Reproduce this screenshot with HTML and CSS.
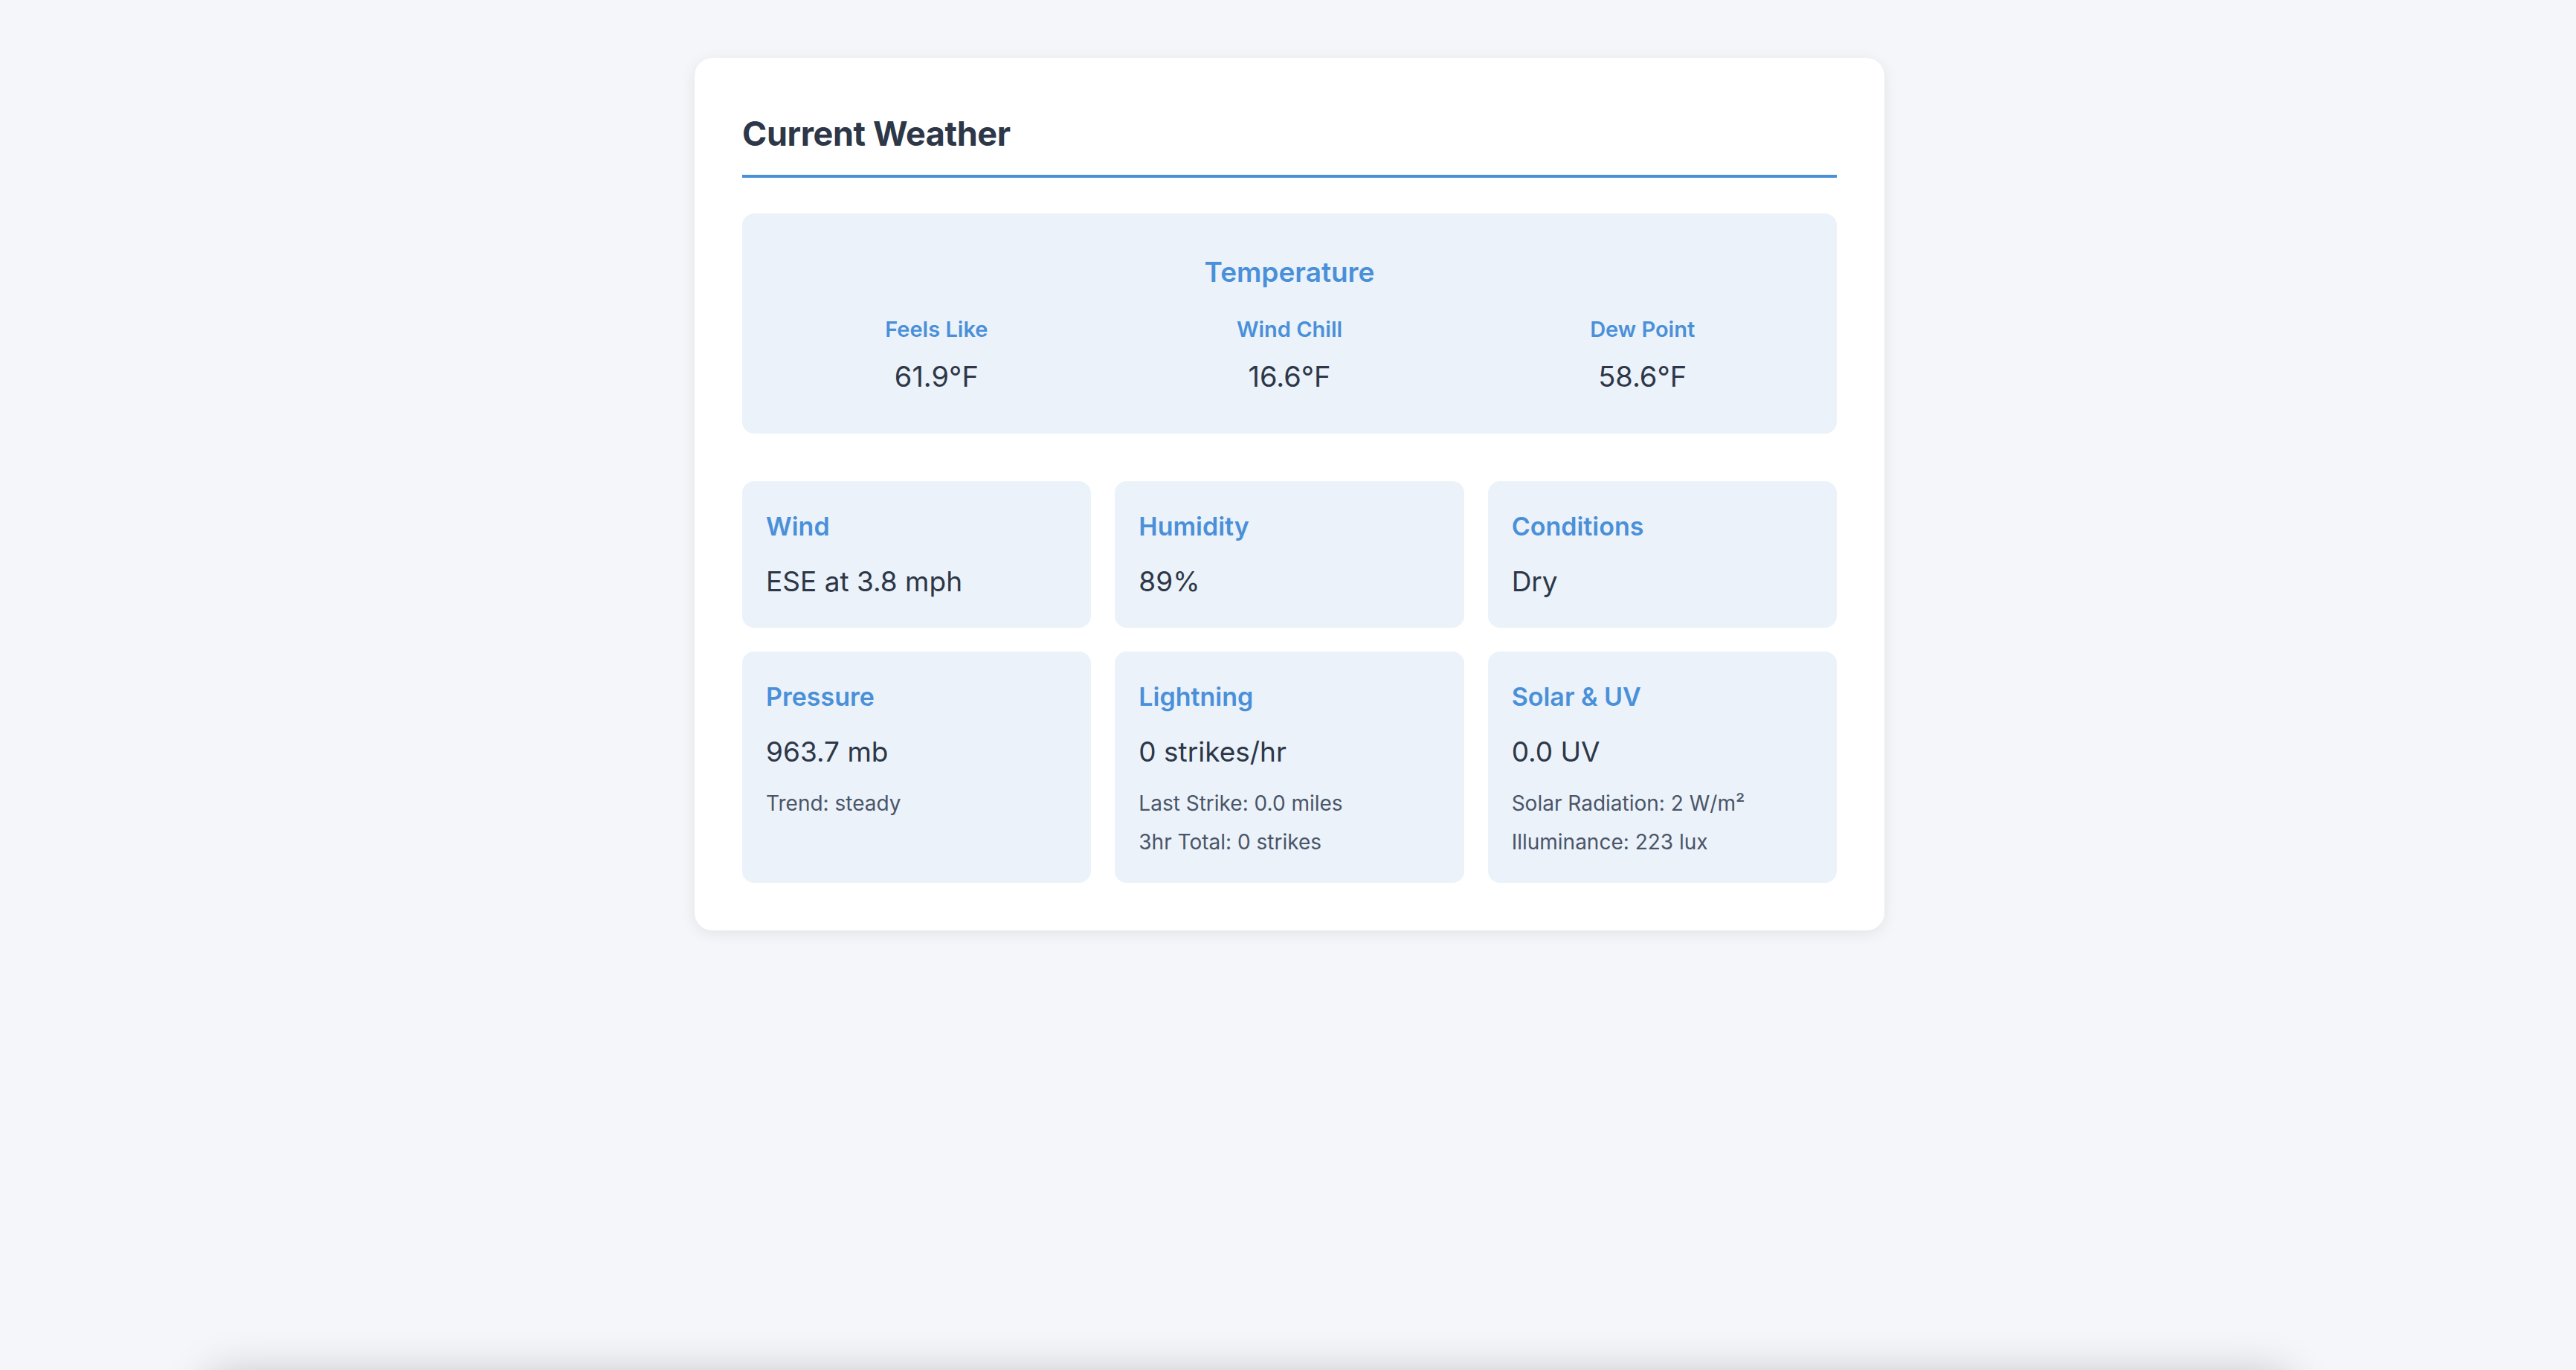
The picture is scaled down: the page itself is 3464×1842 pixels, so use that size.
FILE: index.html
```html
<!DOCTYPE html>
<html lang="en">
<head>
<meta charset="utf-8">
<title>Current Weather</title>
<link rel="stylesheet" href="styles.css">
</head>
<body>
<main class="page">
  <section class="weather-card">
    <h2 class="card-title">Current Weather</h2>

    <div class="temp-panel">
      <h3 class="panel-title">Temperature</h3>
      <div class="temp-grid">
        <div class="temp-item">
          <div class="temp-label">Feels Like</div>
          <div class="temp-value">61.9°F</div>
        </div>
        <div class="temp-item">
          <div class="temp-label">Wind Chill</div>
          <div class="temp-value">16.6°F</div>
        </div>
        <div class="temp-item">
          <div class="temp-label">Dew Point</div>
          <div class="temp-value">58.6°F</div>
        </div>
      </div>
    </div>

    <div class="stat-grid">
      <div class="stat">
        <h3 class="stat-title">Wind</h3>
        <div class="stat-value">ESE at 3.8 mph</div>
      </div>
      <div class="stat">
        <h3 class="stat-title">Humidity</h3>
        <div class="stat-value">89%</div>
      </div>
      <div class="stat">
        <h3 class="stat-title">Conditions</h3>
        <div class="stat-value">Dry</div>
      </div>
      <div class="stat">
        <h3 class="stat-title">Pressure</h3>
        <div class="stat-value">963.7 mb</div>
        <p class="stat-detail">Trend: steady</p>
      </div>
      <div class="stat">
        <h3 class="stat-title">Lightning</h3>
        <div class="stat-value">0 strikes/hr</div>
        <p class="stat-detail">Last Strike: 0.0 miles</p>
        <p class="stat-detail">3hr Total: 0 strikes</p>
      </div>
      <div class="stat">
        <h3 class="stat-title">Solar &amp; UV</h3>
        <div class="stat-value">0.0 UV</div>
        <p class="stat-detail">Solar Radiation: 2 W/m²</p>
        <p class="stat-detail">Illuminance: 223 lux</p>
      </div>
    </div>
  </section>

  <div class="next-section"></div>
</main>
</body>
</html>
```

FILE: styles.css
```css
html, body {
  margin: 0;
  padding: 0;
}

body {
  background: #f4f6fa;
  font-family: Inter, "Noto Sans", "Liberation Sans", sans-serif;
  color: #2d3748;
  line-height: 1.6;
}

.page {
  padding-top: 78px;
  padding-left: 4px;
}

.weather-card {
  width: 1600px;
  box-sizing: border-box;
  margin: 0 auto;
  background: #ffffff;
  border-radius: 24px;
  padding: 64px;
  box-shadow: 0 4px 20px rgba(0, 0, 0, 0.08);
}

.card-title {
  margin: 2px 0 48px;
  padding-bottom: 19px;
  border-bottom: 4px solid #4a90d9;
  font-size: 45px;
  line-height: 72px;
  font-weight: 700;
  color: #2d3748;
  letter-spacing: -0.4px;
}

.temp-panel {
  background: #ebf2f9;
  border-radius: 16px;
  padding: 50px 48px 46px;
  text-align: center;
}

.panel-title {
  margin: 0 0 25px;
  font-size: 37px;
  line-height: 57.6px;
  font-weight: 600;
  color: #4a90d9;
}

.temp-grid {
  display: grid;
  grid-template-columns: repeat(3, 1fr);
  gap: 48px;
}

.temp-label {
  font-size: 29px;
  font-weight: 600;
  color: #4a90d9;
  margin-bottom: 10px;
}

.temp-value {
  font-size: 38px;
  color: #2d3748;
}

.stat-grid {
  margin-top: 64px;
  display: grid;
  grid-template-columns: repeat(3, 1fr);
  gap: 32px;
}

.stat {
  background: #ebf2f9;
  border-radius: 16px;
  padding: 32px;
}

.stat-title {
  margin: 0 0 16px;
  font-size: 34px;
  line-height: 57.6px;
  font-weight: 600;
  color: #4a90d9;
}

.stat-value {
  font-size: 37px;
  color: #2d3748;
  margin-bottom: 18px;
}

.stat-value:last-child {
  margin-bottom: 0;
}

.stat-detail {
  margin: 0 0 7px;
  font-size: 28px;
  color: #4a5568;
}

.stat-detail:last-child {
  margin-bottom: 0;
}

.next-section {
  margin: 598px 384px 0 274px;
  height: 400px;
  background: #f4f6fa;
  border-radius: 24px;
  box-shadow: 0 0 60px rgba(0, 0, 0, 0.22);
}
```
